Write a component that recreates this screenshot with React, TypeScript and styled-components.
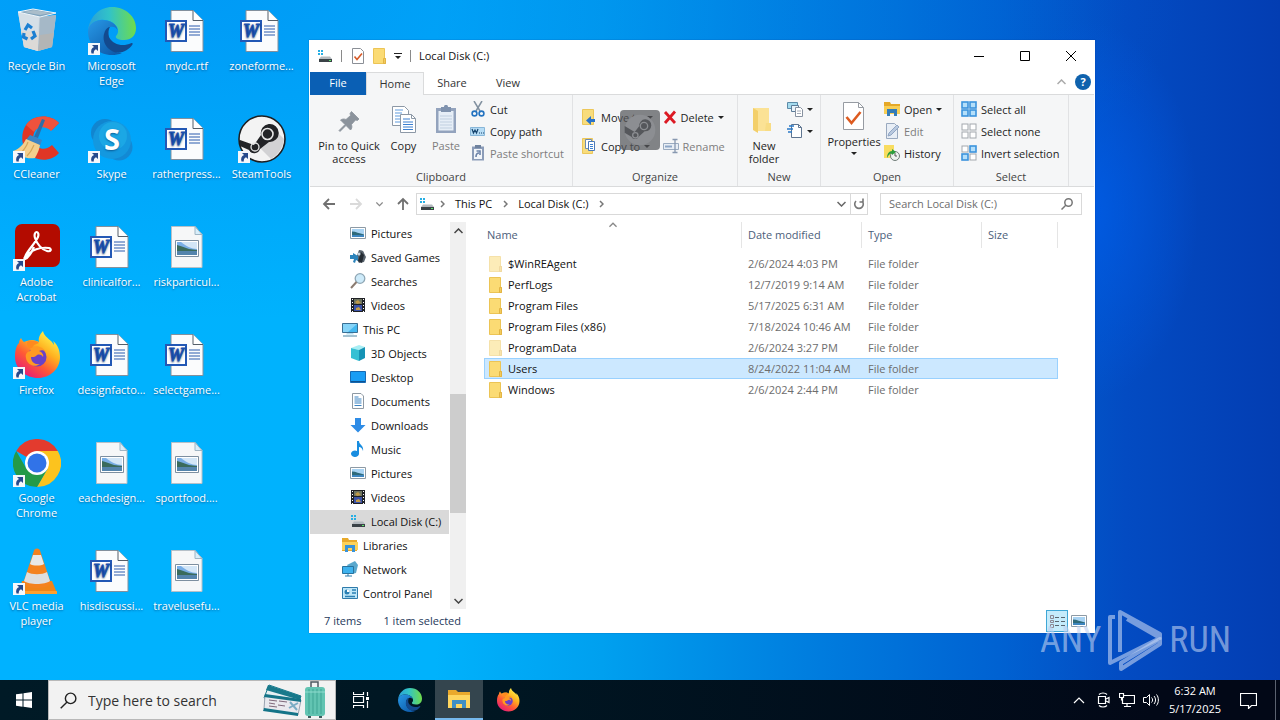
import React from 'react';
import styled, { createGlobalStyle } from 'styled-components';

const GlobalStyle = createGlobalStyle`
  * { box-sizing: border-box; }
  html, body { margin: 0; height: 100%; }
  body, button, input, table {
    font-family: "Open Sans", "Noto Sans", sans-serif;
    font-size: 11px;
    line-height: 15px;
  }
  button {
    border: 0;
    padding: 0;
    margin: 0;
    background: none;
    color: inherit;
    cursor: default;
  }
  svg { display: block; flex: none; }
`;

/* ---------- page ---------- */

const Screen = styled.div`
  min-height: 100vh;
  display: flex;
  flex-direction: column;
  overflow: hidden;
`;

const Desktop = styled.main`
  position: relative;
  flex: 1;
  background:
    radial-gradient(ellipse 110px 190px at 85% 31%, rgba(0, 92, 230, 0.85), rgba(0, 85, 220, 0)),
    radial-gradient(ellipse 1000px 320px at 15% 0%, rgba(0, 120, 235, 0.4), rgba(0, 120, 235, 0)),
    linear-gradient(90deg, #00b2ff 0%, #00b2fc 34%, #00a0ef 47%, #0080e0 62%, #0062d2 78%, #034bc2 88%, #033db2 100%);
`;

const IconGrid = styled.div`
  display: grid;
  grid-template-rows: repeat(6, 108px);
  grid-auto-columns: 75px;
  grid-auto-flow: column;
  width: max-content;
  margin-left: -1px;
`;

const Tile = styled.button`
  display: flex;
  flex-direction: column;
  align-items: center;
  padding-top: 7px;
  color: #fff;
  text-shadow: 0 1px 2px rgba(0, 40, 90, 0.55);
`;

const TileArt = styled.span`
  position: relative;
  display: block;
  width: 48px;
  height: 48px;
  margin-bottom: 3px;
`;

const ShortcutBadge = styled.span`
  position: absolute;
  left: 0;
  bottom: 0;
`;

const TileLabel = styled.span`
  width: 74px;
  text-align: center;
  white-space: pre-line;
`;

const DragGhost = styled.div`
  position: absolute;
  left: 620px;
  top: 110px;
  width: 40px;
  height: 40px;
  border-radius: 4px;
  background: rgba(84, 86, 90, 0.72);
  display: grid;
  place-items: center;
`;

const Watermark = styled.div`
  position: absolute;
  right: 49px;
  bottom: 8px;
  height: 64px;
  display: flex;
  align-items: center;
  gap: 6px;
  color: rgba(190, 208, 240, 0.62);
  font-family: "Liberation Sans Narrow", "Roboto Condensed", "Liberation Sans", sans-serif;
  font-size: 36px;
  line-height: 48px;
`;

/* ---------- window ---------- */

const Window = styled.section`
  position: absolute;
  left: 309px;
  top: 40px;
  width: 786px;
  padding: 1px;
  background: #fff;
  color: #111;
  box-shadow: 0 0 1px rgba(0, 40, 120, 0.6);
`;

const TitleBar = styled.header`
  display: flex;
  align-items: center;
  height: 31px;
  padding: 0 0 2px 7px;
`;

const QuickAccess = styled.div`
  display: flex;
  align-items: center;
  gap: 6px;
  padding-right: 6px;
`;

const Bar = styled.span`
  width: 1px;
  height: 12px;
  margin: 0 2px;
  background: #8a8a8a;
`;

const Title = styled.h1`
  flex: 1;
  margin: 0;
  font-size: 11px;
  font-weight: 400;
`;

const CaptionButton = styled.button`
  display: grid;
  place-items: center;
  width: 46px;
  height: 29px;
`;

const TabRow = styled.nav`
  display: flex;
  height: 23px;
  border-bottom: 1px solid #dadbdc;
`;

const Tab = styled.button<{ $kind?: 'file' | 'active' }>`
  width: ${p => (p.$kind === 'active' ? 58 : 56)}px;
  height: 23px;
  padding-bottom: 2px;
  color: ${p => (p.$kind === 'file' ? '#fff' : '#333')};
  background: ${p => (p.$kind === 'file' ? '#0a5fb4' : p.$kind === 'active' ? '#f5f6f7' : 'transparent')};
  border: ${p => (p.$kind === 'active' ? '1px solid #dadbdc' : '0')};
  border-bottom: 0;
`;

const TabEnd = styled.div`
  display: flex;
  align-items: center;
  gap: 9px;
  margin-left: auto;
  padding: 0 3px 2px 0;
`;

const Ribbon = styled.div`
  display: flex;
  height: 92px;
  background: #f5f6f7;
  border-bottom: 1px solid #dadbdc;
`;

const Group = styled.div<{ $width: number }>`
  display: flex;
  flex-direction: column;
  width: ${p => p.$width}px;
  border-right: 1px solid #e1e2e4;
`;

const GroupBody = styled.div<{ $indent?: boolean }>`
  display: flex;
  flex: 1;
  padding: 3px 0 0 ${p => (p.$indent ? 7 : 3)}px;
`;

const GroupLabel = styled.div`
  height: 17px;
  text-align: center;
  color: #444;
`;

const BigButton = styled.button<{ $width: number; $dim?: boolean }>`
  display: flex;
  flex-direction: column;
  align-items: center;
  width: ${p => p.$width}px;
  padding-top: 3px;
  line-height: 13px;
  white-space: pre-line;
  color: ${p => (p.$dim ? '#7d7d7d' : '#1e1e1e')};

  svg:first-child { margin-bottom: 2px; }
  svg:last-child { margin-top: 4px; }
`;

const Stack = styled.div<{ $loose?: boolean }>`
  display: flex;
  flex-direction: column;
  padding: ${p => (p.$loose ? '8px 5px 0 5px' : '0')};
  gap: ${p => (p.$loose ? 7 : 0)}px;
`;

const SmallButton = styled.button<{ $dim?: boolean }>`
  display: flex;
  align-items: center;
  gap: 4px;
  height: 22px;
  white-space: nowrap;
  color: ${p => (p.$dim ? '#7d7d7d' : '#1e1e1e')};
`;

const AddressRow = styled.div`
  display: flex;
  align-items: center;
  height: 35px;
  padding: 0 12px 2px 12px;
`;

const History = styled.div`
  display: flex;
  align-items: center;
  justify-content: space-between;
  width: 94px;
  padding-right: 6px;
`;

const AddressBox = styled.div`
  display: flex;
  align-items: center;
  flex: 1;
  height: 22px;
  padding-left: 2px;
  border: 1px solid #d9d9d9;
`;

const Crumb = styled.button`
  padding: 0 6px;
`;

const CrumbArrow = styled.span`
  display: grid;
  place-items: center;
  width: 14px;
`;

const AddressEnd = styled.div`
  display: flex;
  margin-left: auto;
`;

const AddressButton = styled.button<{ $ruled?: boolean }>`
  display: grid;
  place-items: center;
  width: 17px;
  height: 20px;
  border-left: ${p => (p.$ruled ? '1px solid #d9d9d9' : '0')};
`;

const SearchBox = styled.label`
  display: flex;
  align-items: center;
  width: 202px;
  height: 22px;
  margin-left: 12px;
  padding: 0 8px;
  border: 1px solid #d9d9d9;
`;

const SearchInput = styled.input`
  flex: 1;
  min-width: 0;
  padding: 0;
  border: 0;
  outline: 0;
  background: transparent;
  &::placeholder { color: #6d6d6d; opacity: 1; }
`;

const Body = styled.div`
  display: flex;
  height: 387px;
`;

const NavPane = styled.nav`
  width: 140px;
  overflow: hidden;
`;

const NavItem = styled.button<{ $top?: boolean; $selected?: boolean }>`
  display: flex;
  align-items: center;
  gap: 5px;
  width: 139px;
  height: 24px;
  padding: 0 0 2px ${p => (p.$top ? 32 : 40)}px;
  white-space: nowrap;
  background: ${p => (p.$selected ? '#d9d9d9' : 'transparent')};
`;

const ScrollTrack = styled.div`
  display: flex;
  flex-direction: column;
  width: 16px;
  background: #f0f0f0;
`;

const ScrollArrow = styled.button`
  display: grid;
  place-items: center;
  height: 17px;
`;

const ScrollSpace = styled.div<{ $grow: number; $thumb?: boolean }>`
  flex: ${p => p.$grow};
  background: ${p => (p.$thumb ? '#cdcdcd' : 'transparent')};
`;

const Listing = styled.div`
  flex: 1;
  margin-left: 2px;
  padding-left: 16px;
`;

const FileTable = styled.table`
  width: 574px;
  table-layout: fixed;
  border-collapse: separate;
  border-spacing: 0;

  tbody::before {
    content: "";
    display: block;
    height: 5px;
  }
`;

const HeadCell = styled.th<{ $width: number; $first?: boolean }>`
  position: relative;
  width: ${p => p.$width}px;
  height: 26px;
  padding: 0 0 2px ${p => (p.$first ? 3 : 6)}px;
  border-right: 1px solid #e5e5e5;
  text-align: left;
  font-weight: 400;
  color: #4c607a;
`;

const SortMark = styled.span`
  position: absolute;
  top: 0;
  left: 0;
  right: 0;
  display: grid;
  justify-items: center;
`;

const Row = styled.tr<{ $selected?: boolean }>`
  td {
    height: 21px;
    padding: 0 0 0 6px;
    white-space: nowrap;
    color: #6d6d6d;
    background: ${p => (p.$selected ? '#cce8ff' : 'transparent')};
    border: solid ${p => (p.$selected ? '#99d1ff' : 'transparent')};
    border-width: 1px 0;
  }
  td:first-child { border-left-width: 1px; padding-left: 3px; }
  td:last-child { border-right-width: 1px; }
`;

const FileName = styled.span`
  display: flex;
  align-items: center;
  gap: 4px;
  color: #111;
`;

const StatusBar = styled.footer`
  display: flex;
  align-items: center;
  gap: 22px;
  height: 23px;
  padding-left: 14px;
  color: #1e395b;
`;

const ViewModes = styled.div`
  display: flex;
  margin-left: auto;
  padding-right: 4px;
`;

const ViewButton = styled.button<{ $on?: boolean }>`
  display: grid;
  place-items: center;
  width: 22px;
  height: 22px;
  border: 1px solid ${p => (p.$on ? '#3fa7d6' : 'transparent')};
  background: ${p => (p.$on ? '#c5ebfb' : 'transparent')};
`;

/* ---------- task bar ---------- */

const TaskBar = styled.footer`
  display: flex;
  height: 40px;
  background: linear-gradient(90deg, #001a26, #001622 40%, #020817 90%);
  color: #fff;
`;

const TaskButton = styled.button<{ $active?: boolean }>`
  display: grid;
  place-items: center;
  width: 48px;
  height: 40px;
  margin-right: 1px;
  background: ${p => (p.$active ? '#34454e' : 'transparent')};
  border-bottom: ${p => (p.$active ? '2px solid #76b9ed' : '0')};
`;

const TaskSearch = styled.label`
  display: flex;
  align-items: center;
  gap: 11px;
  width: 288px;
  margin: 0 1px 0 -1px;
  padding: 0 7px 0 11px;
  background: #f2f2f2;
  border: 1px solid #b8b8b8;
`;

const TaskSearchInput = styled(SearchInput)`
  padding-top: 1px;
  font-size: 14px;
  line-height: 20px;
  &::placeholder { color: #333; }
`;

const Tray = styled.div`
  display: flex;
  align-items: center;
  margin-left: auto;
`;

const TrayButton = styled.button<{ $width: number }>`
  display: grid;
  place-items: center;
  width: ${p => p.$width}px;
  height: 40px;
`;

const Clock = styled.time`
  width: 64px;
  text-align: center;
  line-height: 18px;
`;

const ShowDesktop = styled.button`
  width: 5px;
  height: 40px;
  margin-left: 6px;
  border-left: 1px solid #5b6270;
`;

/* ---------- desktop artwork (48px) ---------- */

const Art = ({ size = 48, children }: { size?: number; children: React.ReactNode }) => (
  <svg width={size} height={size} viewBox="0 0 48 48" fill="none" aria-hidden="true">{children}</svg>
);

const ShortcutArrow = () => (
  <svg width="12" height="12" viewBox="0 0 12 12" aria-hidden="true">
    <path d="M0 0h12v12H0z" fill="#f4f7fb" />
    <path d="M4 2h6v6L8 6.200C6.200 7.200 5.600 8.500 5.800 10.500H3.500C2.500 7.500 3.500 5.200 6 4z" fill="#274a8c" />
  </svg>
);

const BinArt = () => (
  <Art>
    <path d="M5 5l6 35 14 4 14-4 4-32-15 2z" fill="#c3d0db" />
    <path d="M5 5l6 35 14 4 1-34z" fill="#d5dfe7" />
    <path d="M8 24l3 16 14 4 1-19z" fill="#dcdad7" />
    <path d="M27 10l-2 34 14-4 4-32z" fill="#a5b8c7" />
    <path d="M27 28l-2 16 14-4 2-14z" fill="#b9b4ae" opacity=".7" />
    <path d="M5 5l15-3 23 4-16 4z" fill="#7fa3bd" stroke="#f1f6fa" />
    <path d="M10 5l11-2 17 3-11 2z" fill="#aabdca" />
    <g stroke="#1b7fd2" strokeWidth="3.200">
      <path d="M12 23l3-5 4 3" /><path d="M20 24l2 5-4 3" /><path d="M14.500 32l-4-2 .5-4" />
    </g>
  </Art>
);

const EdgeArt = ({ size }: { size?: number }) => (
  <Art size={size}>
    <defs>
      <linearGradient id="edgeTop" x1="0" y1="20" x2="48" y2="18" gradientUnits="userSpaceOnUse">
        <stop stopColor="#2a9fd8" /><stop offset=".45" stopColor="#31c3c8" /><stop offset="1" stopColor="#70dc4a" />
      </linearGradient>
      <linearGradient id="edgeLeft" x1="4" y1="16" x2="30" y2="46" gradientUnits="userSpaceOnUse">
        <stop stopColor="#2592e0" /><stop offset="1" stopColor="#0d5aa9" />
      </linearGradient>
    </defs>
    <path d="M0 23C2 9 12 0 24 0c14 0 24 10 24 21 0 8-5 12-12 12-6 0-9-2-8-4 2-2 3-5 1-9-3-5-10-8-17-7C6 14 2 17 0 23z" fill="url(#edgeTop)" />
    <path d="M0 24C1 17 7 13 14 13c8 0 15 4 15.500 10C28 20 25 19 22 20c-7 2-8 13-2 20 4 4 9 6 14 6-3 1.500-7 2-10 2C10 48 0 38 0 24z" fill="url(#edgeLeft)" />
    <path d="M17 24c-4 9 1 19 11 21.500 7 1 13-3 16.500-8 .5-1-.3-1.800-1.500-1.200C35 40 25 38 21 30c-1-4-.5-8 1-10-2 0-4 2-5 4z" fill="#134a8e" />
  </Art>
);

const CCleanerArt = () => (
  <Art>
    <path d="M46 8C38-1 20-1 13 10c-7 11-4 26 7 32 9 5 20 3 26-4l-7-8c-4 4-10 5-14 2-5-4-6-11-3-16 4-6 12-6 17-1z" fill="#df3626" />
    <path d="M46 8C38-1 20-1 13 10l8 7c4-6 12-6 17-1z" fill="#f0523c" />
    <path d="M29 4l3 1-7 18-4-1z" fill="#2e6ea8" />
    <path d="M17 20l12 5-2 6-14-6z" fill="#3a85c5" />
    <path d="M13 24l14 6c-1 6-3 9-5 13-8 1-15-1-22-7 6-2 10-6 13-12z" fill="#f3cf8d" />
    <path d="M15 27c-2 6-5 9-8 12m14-9c-2 5-4 8-7 11" stroke="#d5a658" strokeWidth="1.200" />
  </Art>
);

const SkypeArt = () => (
  <Art>
    <circle cx="17" cy="18" r="14" fill="#1185cf" /><circle cx="31" cy="32" r="13.500" fill="#1389d4" />
    <circle cx="24" cy="25" r="19" fill="#1498df" /><circle cx="25" cy="21" r="14" fill="#1fb0ea" opacity=".6" />
    <text x="24" y="35" textAnchor="middle" fontFamily="Open Sans, sans-serif" fontWeight="700" fontSize="29" fill="#fff">S</text>
  </Art>
);

const WordArt = () => (
  <Art>
    <path d="M8 3.500h22l10 10v31H8z" fill="#fbfcfd" stroke="#83909d" />
    <path d="M30 3.500v10h10" fill="#fff" stroke="#555f69" />
    <path d="M26 19h11M26 22h11M26 25h11M26 28h11" stroke="#2a5aad" />
    <path d="M3 14h20v20H3z" fill="#fff" stroke="#2358b5" strokeWidth="2" />
    <text x="13" y="30" textAnchor="middle" fontFamily="Liberation Serif, serif" fontWeight="700" fontStyle="italic" fontSize="18" fill="#1d51b0" stroke="#1d51b0" strokeWidth=".8">W</text>
  </Art>
);

const PictureArt = () => (
  <Art>
    <path d="M8.500 3.500H32l7 8v33H8.500z" fill="#f6f7f8" stroke="#b6c0c8" />
    <path d="M32 3.500v8h7z" fill="#d8eefa" stroke="#9fb5c4" />
    <path d="M12.500 17.500h23v16h-23z" fill="#fff" stroke="#7d8fa0" />
    <path d="M14 19h20v13H14z" fill="#79aee6" /><path d="M18 19h16v7c-6 0-11-3-16-7z" fill="#d3e6f7" />
    <path d="M14 22c5 1 8 3 12 4l8 1v2H14z" fill="#3a6b5c" />
    <path d="M14 28h20v4H14z" fill="#5484ac" />
  </Art>
);

const SteamArt = () => (
  <Art>
    <circle cx="24" cy="24" r="23" fill="#f3f3f3" stroke="#1d1e20" strokeWidth="1.600" />
    <path d="M34 12l12 12c-1 9-6 16-13 20L22 33z" fill="#d2d2d4" />
    <path d="M2 25l14 5 7-10a9 9 0 1 1 8 7l-9 7a6 6 0 0 1-11 1L2 31z" fill="#222326" />
    <circle cx="29.500" cy="19" r="5.500" stroke="#e6e6e6" strokeWidth="1.600" />
    <circle cx="17" cy="32" r="4" stroke="#e6e6e6" strokeWidth="1.300" />
  </Art>
);

const AcrobatArt = () => (
  <Art>
    <rect x="2" y="1" width="45" height="43" rx="7" fill="#b30b00" />
    <path d="M12 34c2-6 9-12 13-20 1-3 0-5-1.500-5S21 12 22 15c2 6 7 12 12 13 4 1 5-2 2-3-8-1-16 2-21 6-4 3-4 5-3 5 3-1 7-7 9-12" stroke="#fff" strokeWidth="2.200" strokeLinejoin="round" />
  </Art>
);

const FirefoxArt = ({ size }: { size?: number }) => (
  <Art size={size}>
    <defs>
      <linearGradient id="fox" x1="40" y1="5" x2="12" y2="44" gradientUnits="userSpaceOnUse">
        <stop stopColor="#fff14a" /><stop offset=".35" stopColor="#ffb01f" /><stop offset=".65" stopColor="#ff5a35" /><stop offset="1" stopColor="#e81e75" />
      </linearGradient>
    </defs>
    <path d="M6 12c0-2 1-4 2-5 1 2 2 3 3 4 2-1 5-2 8-2 3 0 5 1 7 2-1-4 1-8 4-11 1 5 5 7 8 10 1 1 2 2 3 4 0-1 0-2-1-4 5 4 7 10 7 16 0 12-10 21-22 21S2 38 2 26c0-6 1-11 4-14z" fill="url(#fox)" />
    <circle cx="24" cy="26" r="9.500" fill="#6941c8" />
    <path d="M17 18c4-5 13-3 16 3-2-2-5-2-7-1 3 1 5 4 4 6-2-3-5-3-7-1-1 1-3 1-5 1 0 5 4 8 9 7-5 4-13 1-14-6-1-4 1-6 4-7 1-1 1-2 0-2z" fill="#ff9a22" />
    <path d="M14 11c3-2 9-2 12 1l-5 2c-1 1-2 3-3 3-3 0-4-2-4-6z" fill="#ff8a1f" />
  </Art>
);

const ChromeArt = () => (
  <Art>
    <path d="M24 24L3.200 12A24 24 0 0 1 44.800 12z" fill="#e33b2e" />
    <path d="M24 12h20.800A24 24 0 0 1 24 48l10.400-18z" fill="#fcc31e" />
    <path d="M13.600 30L3.200 12A24 24 0 0 0 24 48l10.400-18z" fill="#249a48" />
    <circle cx="24" cy="24" r="12" fill="#fff" /><circle cx="24" cy="24" r="9.500" fill="#3173e8" />
  </Art>
);

const VlcArt = () => (
  <Art>
    <path d="M9 34L6 46h38l-5-12z" fill="#f08418" /><path d="M6 44h38v3H6z" fill="#ffa02e" />
    <path d="M24 1.500c2 0 2.500 1 3 2l11 33c-5 6-23 6-28 0L21 3.500c.5-1 1-2 3-2z" fill="#f4821f" />
    <path d="M20 8h8l3 9c-3 2-11 2-14 0z" fill="#e8e8e8" />
    <path d="M14 25c5 3 15 3 20 0l3 9c-5 4-21 4-26 0z" fill="#dedede" />
  </Art>
);

/* ---------- small artwork ---------- */

const Glyph = ({ w = 16, h = 16, children }: { w?: number; h?: number; children: React.ReactNode }) => (
  <svg width={w} height={h} viewBox={`0 0 ${w} ${h}`} fill="none" aria-hidden="true">{children}</svg>
);

const Caret = () => <Glyph w={6} h={3}><path d="M0 0h6L3 3z" fill="#222" /></Glyph>;
const ChevronRight = () => <Glyph w={5} h={8}><path d="M1 1l3 3-3 3" stroke="#777" strokeWidth="1.500" /></Glyph>;
const Chevron = ({ up, color = '#666', w = 9 }: { up?: boolean; color?: string; w?: number }) => (
  <svg width={w} height="6" viewBox="0 0 9 6" fill="none" aria-hidden="true">
    <path d={up ? 'M.5 5l4-4 4 4' : 'M.5 1l4 4 4-4'} stroke={color} strokeWidth="1.500" />
  </svg>
);

const DriveIcon = () => (
  <Glyph>
    <path d="M1 2h2v2H1zM4 2h2v2H4zM1 5h2v2H1zM4 5h2v2H4z" fill="#27afe4" />
    <path d="M4 8.500h9l2 2.500H2z" fill="#b4babf" /><path d="M2 11h13v3H2z" fill="#3a4247" /><path d="M12 12.500h2" stroke="#5ee86a" />
  </Glyph>
);
const CheckPage = () => (
  <Glyph><path d="M2.500.5h8l3 3v12h-11z" fill="#fff" stroke="#8b8f96" /><path d="M4.500 8.500l2.500 3 5-6" stroke="#d65a28" strokeWidth="1.600" /></Glyph>
);
const FolderIcon = ({ faded }: { faded?: boolean }) => (
  <Glyph>
    <g opacity={faded ? 0.5 : 1}>
      <path d="M1.500.5h11v10h1v5h-12z" fill="#fbdb74" stroke="#ecc455" /><path d="M11.500 10.500h2v5h-2z" fill="#f3cb5c" stroke="#e2b445" />
    </g>
  </Glyph>
);
const PicturesIcon = () => (
  <Glyph>
    <path d="M.5 2.500h15v11H.5z" fill="#fff" stroke="#8d9aa5" /><path d="M2 4h12v8H2z" fill="#a8d3f3" />
    <path d="M2 6.500c4 0 7 2 12 3V12H2z" fill="#2e6a7a" /><path d="M2 10h12v2H2z" fill="#3e86bf" />
  </Glyph>
);
const GamesIcon = () => (
  <Glyph>
    <path d="M9 1c3 0 5 1 5 3l2 4-2 5-5 1-3-5z" fill="#59636d" /><path d="M11 3l3 3-2 8-4-2z" fill="#252c33" />
    <path d="M0 6h3V4l5 3v5l-2-1-1 3-2-1 1-3H0z" fill="#2b83bb" /><circle cx="9" cy="5" r="1.500" fill="#cbd8e2" />
  </Glyph>
);
const SearchesIcon = () => (
  <Glyph><circle cx="10" cy="5.500" r="4.800" fill="#cdeaf9" stroke="#8fa7b5" strokeWidth="1.300" /><path d="M6.500 9L1 15" stroke="#8b7b70" strokeWidth="2" /></Glyph>
);
const VideosIcon = () => (
  <Glyph>
    <path d="M1 1h14v14H1z" fill="#1f2126" /><path d="M4 2h8v5H4z" fill="#6d7460" /><path d="M4 8h8v6H4z" fill="#3c53a8" /><path d="M5 5l3-2 3 3-4 1zM6 11l3-1 2 3H6z" fill="#c09a48" />
    <path d="M2.500 2v13M13.500 2v13" stroke="#fff" strokeDasharray="1 2" />
  </Glyph>
);
const PcIcon = () => (
  <Glyph><path d="M.5 2.500h15v9H.5z" fill="#44b8f0" stroke="#3a6f94" /><path d="M1 3h14L6 11H1z" fill="#86d4f8" /><path d="M5 12h6l1 1.500H4z" fill="#b4dff2" /><path d="M1 15h14" stroke="#4b87a5" /></Glyph>
);
const CubeIcon = () => (
  <Glyph><path d="M1 3l8-3 6 2-6 3z" fill="#a8eef4" /><path d="M1 3l8 2v11l-8-3z" fill="#35c0d4" /><path d="M9 5l6-3v11l-6 3z" fill="#1593b5" /></Glyph>
);
const DesktopIcon = () => <Glyph><path d="M.5 2.500h15v11H.5z" fill="#199df5" stroke="#1769b2" /><path d="M1 12.500h14" stroke="#0d5291" /></Glyph>;
const DocumentsIcon = () => (
  <Glyph><path d="M2.500.5H11L13.500 3v12.500h-11z" fill="#fff" stroke="#8e99a3" /><path d="M4.500 4h4M4.500 6h7M4.500 8h7M4.500 10h7M4.500 12.500h7" stroke="#3b83c2" /></Glyph>
);
const DownloadsIcon = () => <Glyph><path d="M5 1h6v7h4.500L8 15.500.5 8H5z" fill="#2e8ce6" /></Glyph>;
const MusicIcon = () => (
  <Glyph><path d="M7 0h2c0 4 5 4 4 10-1-3-2-4-4-4v6.500a4 3.200 0 1 1-2-2.500z" fill="#188de0" /></Glyph>
);
const LibrariesIcon = () => (
  <Glyph><path d="M0 1h6l1 2h8v11H0z" fill="#e8aa2c" /><path d="M0 5h16v8H0z" fill="#fcd25a" /><path d="M3 15V8h10v7h-3v-4H6v4z" fill="#3793da" /></Glyph>
);
const NetworkIcon = () => (
  <Glyph>
    <path d="M5 4l8-4 3 4-2 8-4 1z" fill="#5aa8cd" /><path d="M.5 5.500h11v7H.5z" fill="#3eb2ee" stroke="#28739e" /><path d="M3 15h7M6 13v2" stroke="#2b7cae" />
  </Glyph>
);
const ControlIcon = () => (
  <Glyph>
    <path d="M.5 2.500h15v11H.5z" fill="#bfe7f9" stroke="#2f7bab" /><circle cx="5" cy="7" r="2.500" fill="#2a80b4" /><path d="M5 7V4.500A2.500 2.500 0 0 1 7.500 7z" fill="#fff" />
    <path d="M10 5h4M10 8h4M3 11.500h10" stroke="#2a80b4" strokeWidth="1.300" />
  </Glyph>
);

const PinIcon = () => (
  <Glyph w={32} h={32}><path d="M18.500 6.500l7.500 7.500-1.500 1.500-2-.5-4 4.500c1 3 0 4.500-1 5.500l-4.500-4.500-6 6-1-1 6-6-4.500-4.500c1.500-1 3.500-1.500 5.500-.5l4.500-4-.5-2z" fill="#8b939c" stroke="#8b939c" strokeWidth=".8" /></Glyph>
);
const CopyIcon = () => (
  <Glyph w={32} h={32}>
    <path d="M4.500 1.500h12l4 4v15h-16z" fill="#fff" stroke="#8c98a6" /><path d="M7 5h8M7 8h7M7 11h7M7 14h7M7 17h7" stroke="#5f9bdd" />
    <path d="M12.500 9.500h11l4 4v14h-15z" fill="#fff" stroke="#8c98a6" /><path d="M23.500 9.500v4h4" stroke="#8c98a6" /><path d="M15 14h7M15 17h10M15 19.500h10M15 22h10M15 24.500h10" stroke="#3b7fd0" />
  </Glyph>
);
const PasteIcon = () => (
  <Glyph w={32} h={32}>
    <path d="M6 3h20v25H6z" fill="#93a3bd" /><path d="M8.500 6h15v19.500h-15z" fill="#e6eef7" />
    <path d="M10 11h12M10 14h12M10 17h12M10 20h12M10 23h12" stroke="#c0cfe0" /><path d="M11 2h3c0-3 4-3 4 0h3v5H11z" fill="#7f92ae" />
  </Glyph>
);
const CutIcon = () => (
  <Glyph><path d="M4 0l6 10M12 0L6 10" stroke="#8291a0" strokeWidth="1.500" /><circle cx="4.500" cy="12.500" r="2.400" stroke="#2473c0" strokeWidth="1.600" /><circle cx="11.500" cy="12.500" r="2.400" stroke="#2473c0" strokeWidth="1.600" /></Glyph>
);
const PathIcon = () => (
  <Glyph><path d="M.5 4.500h14v8H.5z" fill="#b6dcf5" stroke="#88b6d8" /><path d="M2 6l1.500 4L5 7l1.500 3L8 6M9 10h1M11 10h1M13 10h1" stroke="#17456f" strokeWidth="1.200" /></Glyph>
);
const PasteShortcutIcon = () => (
  <Glyph><path d="M2 1.500h12v14H2z" fill="#8b9cb8" /><path d="M4 4h8v10H4z" fill="#f2f5f9" /><path d="M5 0h6v3H5z" fill="#6f829e" /><path d="M6 12c0-3 1-4 3-4M6.500 6H10v4" stroke="#6b82a8" strokeWidth="1.600" /></Glyph>
);
const MoveIcon = () => (
  <Glyph><path d="M1.500.5h11v15h-11z" fill="#f8dc7c" stroke="#ecc75a" /><path d="M14 10H10V7l-5 4.500 5 4.500v-3h4z" fill="#2a73c9" /></Glyph>
);
const CopyToIcon = () => (
  <Glyph><path d="M1.500.5h10v15h-10z" fill="#f8dc7c" stroke="#ecc75a" /><path d="M4.500 1.500h6v9h-6z" fill="#fff" stroke="#6f8cae" /><path d="M7.500 3.500h6v9h-6z" fill="#fff" stroke="#4a79b8" /><path d="M9 6.500h3M9 8.500h3M9 10.500h3" stroke="#3b7fd0" /></Glyph>
);
const DeleteIcon = () => <Glyph w={14}><path d="M2 3l10 11M12 2.500L2 14" stroke="#dc1a24" strokeWidth="2.800" /></Glyph>;
const RenameIcon = () => (
  <Glyph><path d="M.5 5.500h15v6H.5z" fill="#e8eef5" stroke="#9aabc0" /><path d="M2 7.500h7v2H2z" fill="#8da6c6" /><path d="M9.500 1.500h5M12 1.500v13M9.500 14.500h5" stroke="#8798b0" strokeWidth="1.300" /></Glyph>
);
const BigFolderIcon = () => (
  <Glyph w={32} h={32}><path d="M5 3h16v23H9z" fill="#fbe295" /><path d="M5 3l5 3v22l-5-3z" fill="#f3cf6a" /><path d="M18 18h5v8h-6z" fill="#f8dc84" /></Glyph>
);
const NewItemIcon = () => (
  <Glyph><path d="M.5 1.500h10v6H.5z" fill="#a5dbee" stroke="#5c8ba8" /><path d="M4.500 4.500h7v6h-7z" fill="#e9f4fb" stroke="#5c7c99" /><path d="M8.500 6.500h5l2 2v7h-7z" fill="#fff" stroke="#8791a0" /><path d="M10 10h4M10 12.500h4" stroke="#a5acb8" /></Glyph>
);
const EasyIcon = () => (
  <Glyph><path d="M4.500 1.500h7l3 3v10h-10z" fill="#fff" stroke="#5e7590" /><path d="M11.500 1.500v3h3" stroke="#5e7590" /><path d="M2 3h5M0 6h6M1 9h4" stroke="#2a79c7" strokeWidth="1.500" /></Glyph>
);
const PropertiesIcon = () => (
  <Glyph w={32} h={32}><path d="M5.500 1.500h15l5 5v22h-20z" fill="#fff" stroke="#969ba2" /><path d="M20.500 1.500v5h5" stroke="#969ba2" /><path d="M8.500 16l5 6 9-11" stroke="#dd5b20" strokeWidth="2.600" /></Glyph>
);
const OpenIcon = () => (
  <Glyph><path d="M0 1h6l1 2h9v10H0z" fill="#e5a827" /><path d="M0 5h16v8H0z" fill="#f9cf55" /><path d="M3 15V8h10v7h-3v-3H6v3z" fill="#347cb8" /></Glyph>
);
const EditIcon = () => (
  <Glyph><path d="M2.500.5h8l3 3v12h-11z" fill="#e8eef6" stroke="#99a9bf" /><path d="M4 13l1-3 8-8 2 2-8 8z" fill="#b9c9df" stroke="#91a6c4" /></Glyph>
);
const HistoryIcon = () => (
  <Glyph><path d="M0 0h10v13H0z" fill="#f8dc60" /><circle cx="11" cy="11" r="4.500" fill="#eef2f0" stroke="#6f7c78" /><path d="M11 8v3h2" stroke="#555" /><path d="M3 13c0-4 2-7 5-7V4l4 3-4 3V8.500c-2 0-4 2-5 4.500z" fill="#2b9e3d" /></Glyph>
);
const SelectIcon = ({ on }: { on: boolean[] }) => (
  <Glyph>
    {on.map((filled, i) => (
      <rect key={i} x={i % 2 ? 9 : 1} y={i > 1 ? 9 : 1} width="6" height="6"
        fill={filled ? '#b4dffa' : '#fff'} stroke={filled ? '#3b93dc' : '#a3a8ae'} strokeWidth={filled ? 1.6 : 1} />
    ))}
  </Glyph>
);
const Magnifier = ({ color = '#777', size = 12 }: { color?: string; size?: number }) => (
  <svg width={size} height={size} viewBox="0 0 12 12" fill="none" stroke={color} strokeWidth={size > 14 ? 1 : 1.5} aria-hidden="true">
    <circle cx="7.500" cy="4.500" r="3.700" /><path d="M5 7L.5 11.500" />
  </svg>
);
const Arrow = ({ d, color = '#707070' }: { d: string; color?: string }) => <Glyph w={14} h={14}><path d={d} stroke={color} strokeWidth="1.800" /></Glyph>;

const TicketsArt = () => (
  <svg width="66" height="38" viewBox="0 0 66 38" fill="none" aria-hidden="true">
    <path d="M7 4l32 11-4 12L2 17z" fill="#e6eff2" stroke="#157a8d" /><path d="M6 4l33 11-1 4L4 9z" fill="#18798b" />
    <path d="M3 14l36 5-3 15-34-6z" fill="#e9e9ee" stroke="#9aa3b0" /><path d="M3 13l36 5v3L2 16zM2 27l34 5v3L1 30z" fill="#147488" />
    <path d="M7 19l8 1M7 22l6 1M7 25l8 1M17 20l8 1M16 24l7 1" stroke="#7f687a" /><path d="M28 21l7 8m1-7l-9 5" stroke="#7bacc4" strokeWidth="2" />
    <path d="M49 6V1h7v5" stroke="#4d5960" strokeWidth="1.500" /><rect x="43" y="6" width="20" height="29" rx="3" fill="#62c4b2" />
    <path d="M47 8v25M51 8v25M55 8v25M59 8v25" stroke="#3fa594" /><path d="M46 35v2h3v-2M57 35v2h3v-2" fill="#3d5b5c" />
    <path d="M43 11h20" stroke="#91dccf" />
  </svg>
);

/* ---------- data ---------- */

const tiles: [string, React.ReactNode, boolean][] = [
  ['Recycle Bin', <BinArt />, false],
  ['CCleaner', <CCleanerArt />, true],
  ['Adobe\nAcrobat', <AcrobatArt />, true],
  ['Firefox', <FirefoxArt />, true],
  ['Google\nChrome', <ChromeArt />, true],
  ['VLC media\nplayer', <VlcArt />, true],
  ['Microsoft\nEdge', <EdgeArt />, true],
  ['Skype', <SkypeArt />, true],
  ['clinicalfor...', <WordArt />, false],
  ['designfacto...', <WordArt />, false],
  ['eachdesign...', <PictureArt />, false],
  ['hisdiscussi...', <WordArt />, false],
  ['mydc.rtf', <WordArt />, false],
  ['ratherpress...', <WordArt />, false],
  ['riskparticul...', <PictureArt />, false],
  ['selectgame...', <WordArt />, false],
  ['sportfood....', <PictureArt />, false],
  ['travelusefu...', <PictureArt />, false],
  ['zoneforme...', <WordArt />, false],
  ['SteamTools', <SteamArt />, true],
];

const navItems: { label: string; icon: React.ReactNode; top?: boolean; selected?: boolean }[] = [
  { label: 'Pictures', icon: <PicturesIcon /> },
  { label: 'Saved Games', icon: <GamesIcon /> },
  { label: 'Searches', icon: <SearchesIcon /> },
  { label: 'Videos', icon: <VideosIcon /> },
  { label: 'This PC', icon: <PcIcon />, top: true },
  { label: '3D Objects', icon: <CubeIcon /> },
  { label: 'Desktop', icon: <DesktopIcon /> },
  { label: 'Documents', icon: <DocumentsIcon /> },
  { label: 'Downloads', icon: <DownloadsIcon /> },
  { label: 'Music', icon: <MusicIcon /> },
  { label: 'Pictures', icon: <PicturesIcon /> },
  { label: 'Videos', icon: <VideosIcon /> },
  { label: 'Local Disk (C:)', icon: <DriveIcon />, selected: true },
  { label: 'Libraries', icon: <LibrariesIcon />, top: true },
  { label: 'Network', icon: <NetworkIcon />, top: true },
  { label: 'Control Panel', icon: <ControlIcon />, top: true },
];

const files: { name: string; date: string; faded?: boolean; selected?: boolean }[] = [
  { name: '$WinREAgent', date: '2/6/2024 4:03 PM', faded: true },
  { name: 'PerfLogs', date: '12/7/2019 9:14 AM' },
  { name: 'Program Files', date: '5/17/2025 6:31 AM' },
  { name: 'Program Files (x86)', date: '7/18/2024 10:46 AM' },
  { name: 'ProgramData', date: '2/6/2024 3:27 PM', faded: true },
  { name: 'Users', date: '8/24/2022 11:04 AM', selected: true },
  { name: 'Windows', date: '2/6/2024 2:44 PM' },
];

/* ---------- composition ---------- */

const RibbonBar = () => (
  <Ribbon>
    <Group $width={263}>
      <GroupBody>
        <BigButton $width={72}><PinIcon />{'Pin to Quick\naccess'}</BigButton>
        <BigButton $width={37}><CopyIcon />Copy</BigButton>
        <BigButton $width={48} $dim><PasteIcon />Paste</BigButton>
        <Stack>
          <SmallButton><CutIcon />Cut</SmallButton>
          <SmallButton><PathIcon />Copy path</SmallButton>
          <SmallButton $dim><PasteShortcutIcon />Paste shortcut</SmallButton>
        </Stack>
      </GroupBody>
      <GroupLabel>Clipboard</GroupLabel>
    </Group>
    <Group $width={165}>
      <GroupBody>
        <Stack $loose>
          <SmallButton><MoveIcon />Move to <Caret /></SmallButton>
          <SmallButton><CopyToIcon />Copy to <Caret /></SmallButton>
        </Stack>
        <Stack $loose>
          <SmallButton><DeleteIcon />Delete <Caret /></SmallButton>
          <SmallButton $dim><RenameIcon />Rename</SmallButton>
        </Stack>
      </GroupBody>
      <GroupLabel>Organize</GroupLabel>
    </Group>
    <Group $width={83}>
      <GroupBody>
        <BigButton $width={46}><BigFolderIcon />{'New\nfolder'}</BigButton>
        <Stack>
          <SmallButton aria-label="New item"><NewItemIcon /><Caret /></SmallButton>
          <SmallButton aria-label="Easy access"><EasyIcon /><Caret /></SmallButton>
        </Stack>
      </GroupBody>
      <GroupLabel>New</GroupLabel>
    </Group>
    <Group $width={133}>
      <GroupBody>
        <BigButton $width={60}><PropertiesIcon />Properties<Caret /></BigButton>
        <Stack>
          <SmallButton><OpenIcon />Open <Caret /></SmallButton>
          <SmallButton $dim><EditIcon />Edit</SmallButton>
          <SmallButton><HistoryIcon />History</SmallButton>
        </Stack>
      </GroupBody>
      <GroupLabel>Open</GroupLabel>
    </Group>
    <Group $width={115}>
      <GroupBody $indent>
        <Stack>
          <SmallButton><SelectIcon on={[true, true, true, true]} />Select all</SmallButton>
          <SmallButton><SelectIcon on={[false, false, false, false]} />Select none</SmallButton>
          <SmallButton><SelectIcon on={[false, true, true, false]} />Invert selection</SmallButton>
        </Stack>
      </GroupBody>
      <GroupLabel>Select</GroupLabel>
    </Group>
  </Ribbon>
);

const Explorer = () => (
  <Window aria-label="Local Disk (C:)">
    <TitleBar>
      <QuickAccess>
        <DriveIcon /><Bar /><CheckPage /><FolderIcon />
        <Glyph w={8} h={8}><path d="M0 1h8v1H0zM1 4h6L4 7z" fill="#222" /></Glyph>
        <Bar />
      </QuickAccess>
      <Title>Local Disk (C:)</Title>
      <CaptionButton aria-label="Minimize"><Glyph w={10} h={10}><path d="M0 5.500h10" stroke="#000" /></Glyph></CaptionButton>
      <CaptionButton aria-label="Maximize"><Glyph w={10} h={10}><path d="M.5.5h9v9h-9z" stroke="#000" /></Glyph></CaptionButton>
      <CaptionButton aria-label="Close"><Glyph w={10} h={10}><path d="M0 0l10 10M10 0L0 10" stroke="#000" /></Glyph></CaptionButton>
    </TitleBar>
    <TabRow>
      <Tab $kind="file">File</Tab>
      <Tab $kind="active">Home</Tab>
      <Tab>Share</Tab>
      <Tab>View</Tab>
      <TabEnd>
        <Chevron up color="#aaa" />
        <Glyph>
          <circle cx="8" cy="8" r="8" fill="#0f62ad" />
          <text x="8" y="12" textAnchor="middle" fontWeight="700" fontSize="11" fill="#fff">?</text>
        </Glyph>
      </TabEnd>
    </TabRow>
    <RibbonBar />
    <AddressRow>
      <History>
        <Arrow d="M13 7H2M7 2L2 7l5 5" /><Arrow d="M1 7h11M7 2l5 5-5 5" color="#dadada" />
        <Chevron w={7} color="#888" /><Arrow d="M7 13V2M2 7l5-5 5 5" />
      </History>
      <AddressBox>
        <DriveIcon />
        <CrumbArrow><ChevronRight /></CrumbArrow>
        <Crumb>This PC</Crumb>
        <CrumbArrow><ChevronRight /></CrumbArrow>
        <Crumb>Local Disk (C:)</Crumb>
        <CrumbArrow><ChevronRight /></CrumbArrow>
        <AddressEnd>
          <AddressButton aria-label="Previous locations"><Chevron /></AddressButton>
          <AddressButton $ruled aria-label="Refresh">
            <Glyph w={12} h={12}><path d="M3 3a4.300 4.300 0 1 0 6 0M10 .5V4H6.500" stroke="#777" strokeWidth="1.600" /></Glyph>
          </AddressButton>
        </AddressEnd>
      </AddressBox>
      <SearchBox>
        <SearchInput placeholder="Search Local Disk (C:)" aria-label="Search Local Disk (C:)" />
        <Magnifier />
      </SearchBox>
    </AddressRow>
    <Body>
      <NavPane>
        {navItems.map((item, i) => (
          <NavItem key={i} $top={item.top} $selected={item.selected}>{item.icon}{item.label}</NavItem>
        ))}
      </NavPane>
      <ScrollTrack>
        <ScrollArrow aria-label="Scroll up"><Chevron up color="#444" /></ScrollArrow>
        <ScrollSpace $grow={155} />
        <ScrollSpace $grow={119} $thumb />
        <ScrollSpace $grow={79} />
        <ScrollArrow aria-label="Scroll down"><Chevron color="#444" /></ScrollArrow>
      </ScrollTrack>
      <Listing>
        <FileTable>
          <thead>
            <tr>
              <HeadCell $width={258} $first>Name<SortMark><Chevron up color="#888" w={8} /></SortMark></HeadCell>
              <HeadCell $width={120}>Date modified</HeadCell>
              <HeadCell $width={120}>Type</HeadCell>
              <HeadCell $width={76}>Size</HeadCell>
            </tr>
          </thead>
          <tbody>
            {files.map(f => (
              <Row key={f.name} $selected={f.selected}>
                <td><FileName><FolderIcon faded={f.faded} />{f.name}</FileName></td>
                <td>{f.date}</td>
                <td>File folder</td>
                <td />
              </Row>
            ))}
          </tbody>
        </FileTable>
      </Listing>
    </Body>
    <StatusBar>
      <span>7 items</span>
      <span>1 item selected</span>
      <ViewModes>
        <ViewButton $on aria-label="Details">
          <Glyph><path d="M1.500 2.500h3v3h-3zM1.500 7.500h3v2h-3zM1.500 11.500h3v3h-3z" stroke="#8c8792" /><path d="M6 4.500h4M6 8.500h4M6 12.500h4M12 4.500h4M12 8.500h4M12 12.500h4" stroke="#5a6670" /></Glyph>
        </ViewButton>
        <ViewButton aria-label="Large icons"><PicturesIcon /></ViewButton>
      </ViewModes>
    </StatusBar>
  </Window>
);

const Tasks = () => (
  <TaskBar>
    <TaskButton aria-label="Start">
      <Glyph><path d="M0 2.300L6.500 1.400v6.200H0zM7.500 1.200L16 0v7.600H7.500zM0 8.500h6.500v6.200L0 13.800zM7.500 8.500H16V16l-8.500-1.200z" fill="#fff" /></Glyph>
    </TaskButton>
    <TaskSearch>
      <Magnifier color="#222" size={17} />
      <TaskSearchInput placeholder="Type here to search" aria-label="Type here to search" />
      <TicketsArt />
    </TaskSearch>
    <TaskButton aria-label="Task view">
      <Glyph>
        <path d="M.5 0v2.500h10V0M.5 16v-2.500h10V16M.5 4.500h10v6H.5z" stroke="#fff" strokeWidth="1.200" /><path d="M14.500 0v4M14.500 9v7" stroke="#fff" strokeWidth="1.200" /><path d="M13 5h3v3h-3z" fill="#fff" />
      </Glyph>
    </TaskButton>
    <TaskButton aria-label="Microsoft Edge"><EdgeArt size={24} /></TaskButton>
    <TaskButton $active aria-label="File Explorer">
      <Glyph w={22} h={20}><path d="M0 1h8l2 2h12v16H0z" fill="#eaa92c" /><path d="M0 6h22v13H0z" fill="#ffd65f" /><path d="M4 19v-8h14v8h-4v-4H8v4z" fill="#3f8fc4" /></Glyph>
    </TaskButton>
    <TaskButton aria-label="Firefox"><FirefoxArt size={24} /></TaskButton>
    <Tray>
      <TrayButton $width={24} aria-label="Show hidden icons">
        <Glyph w={12} h={8}><path d="M1 7l5-5 5 5" stroke="#fff" strokeWidth="1.200" /></Glyph>
      </TrayButton>
      <TrayButton $width={24} aria-label="Meet now">
        <Glyph><path d="M4 2.500c2-2 6-2 8 0M4 13.500c2 2 6 2 8 0M3.500 4.500h7v7h-7zM11 7l3-1.500v5L11 9" stroke="#fff" strokeWidth="1.200" /></Glyph>
      </TrayButton>
      <TrayButton $width={24} aria-label="Network">
        <Glyph><path d="M4 3.500h11.500v8H3.500V6M8 11.500v3M5 14.500h7M.5 1.500h4v4h-4zM2.500 5.500v3" stroke="#fff" strokeWidth="1.200" /></Glyph>
      </TrayButton>
      <TrayButton $width={24} aria-label="Volume">
        <Glyph><path d="M.5 5.500h3l3-3v11l-3-3h-3zM8.500 5.500c1.500 1.500 1.500 3.500 0 5M11 4c2 2.500 2 5.500 0 8M13.500 2.500c2.500 3 2.500 8 0 11" stroke="#fff" /></Glyph>
      </TrayButton>
      <Clock>6:32 AM<br />5/17/2025</Clock>
      <TrayButton $width={42} aria-label="Notifications">
        <Glyph w={17} h={17}><path d="M.5 1.500h16v12h-5l-3 3v-3h-8z" stroke="#fff" strokeWidth="1.200" /></Glyph>
      </TrayButton>
      <ShowDesktop aria-label="Show desktop" />
    </Tray>
  </TaskBar>
);

export default function App() {
  return (
    <Screen>
      <GlobalStyle />
      <Desktop>
        <IconGrid>
          {tiles.map(([label, art, shortcut]) => (
            <Tile key={label}>
              <TileArt>
                {art}
                {shortcut && <ShortcutBadge><ShortcutArrow /></ShortcutBadge>}
              </TileArt>
              <TileLabel>{label}</TileLabel>
            </Tile>
          ))}
        </IconGrid>
        <Explorer />
        <DragGhost>
          <svg width="32" height="32" viewBox="0 0 48 48" fill="none" aria-hidden="true">
            <circle cx="24" cy="24" r="23" fill="#8c8e92" />
            <path d="M1 18l15 9 7-9a9 9 0 1 1 8 8l-9 8a6 6 0 0 1-11 0L1 28z" fill="#55575b" />
            <circle cx="30" cy="18" r="5.500" stroke="#8c8e92" strokeWidth="2" /><circle cx="17" cy="32" r="4" stroke="#8c8e92" strokeWidth="2" />
          </svg>
        </DragGhost>
        <Watermark aria-label="ANY RUN">
          <span>ANY</span>
          <svg width="56" height="62" viewBox="0 0 56 62" fill="none" stroke="currentColor" strokeWidth="4" strokeLinejoin="round" aria-hidden="true">
            <path d="M8 8H3v46l8-4 40-20M13 43V3l40 22v4L20 10" /><path d="M53 30L14 54v6l39-25z" />
          </svg>
          <span>RUN</span>
        </Watermark>
      </Desktop>
      <Tasks />
    </Screen>
  );
}
